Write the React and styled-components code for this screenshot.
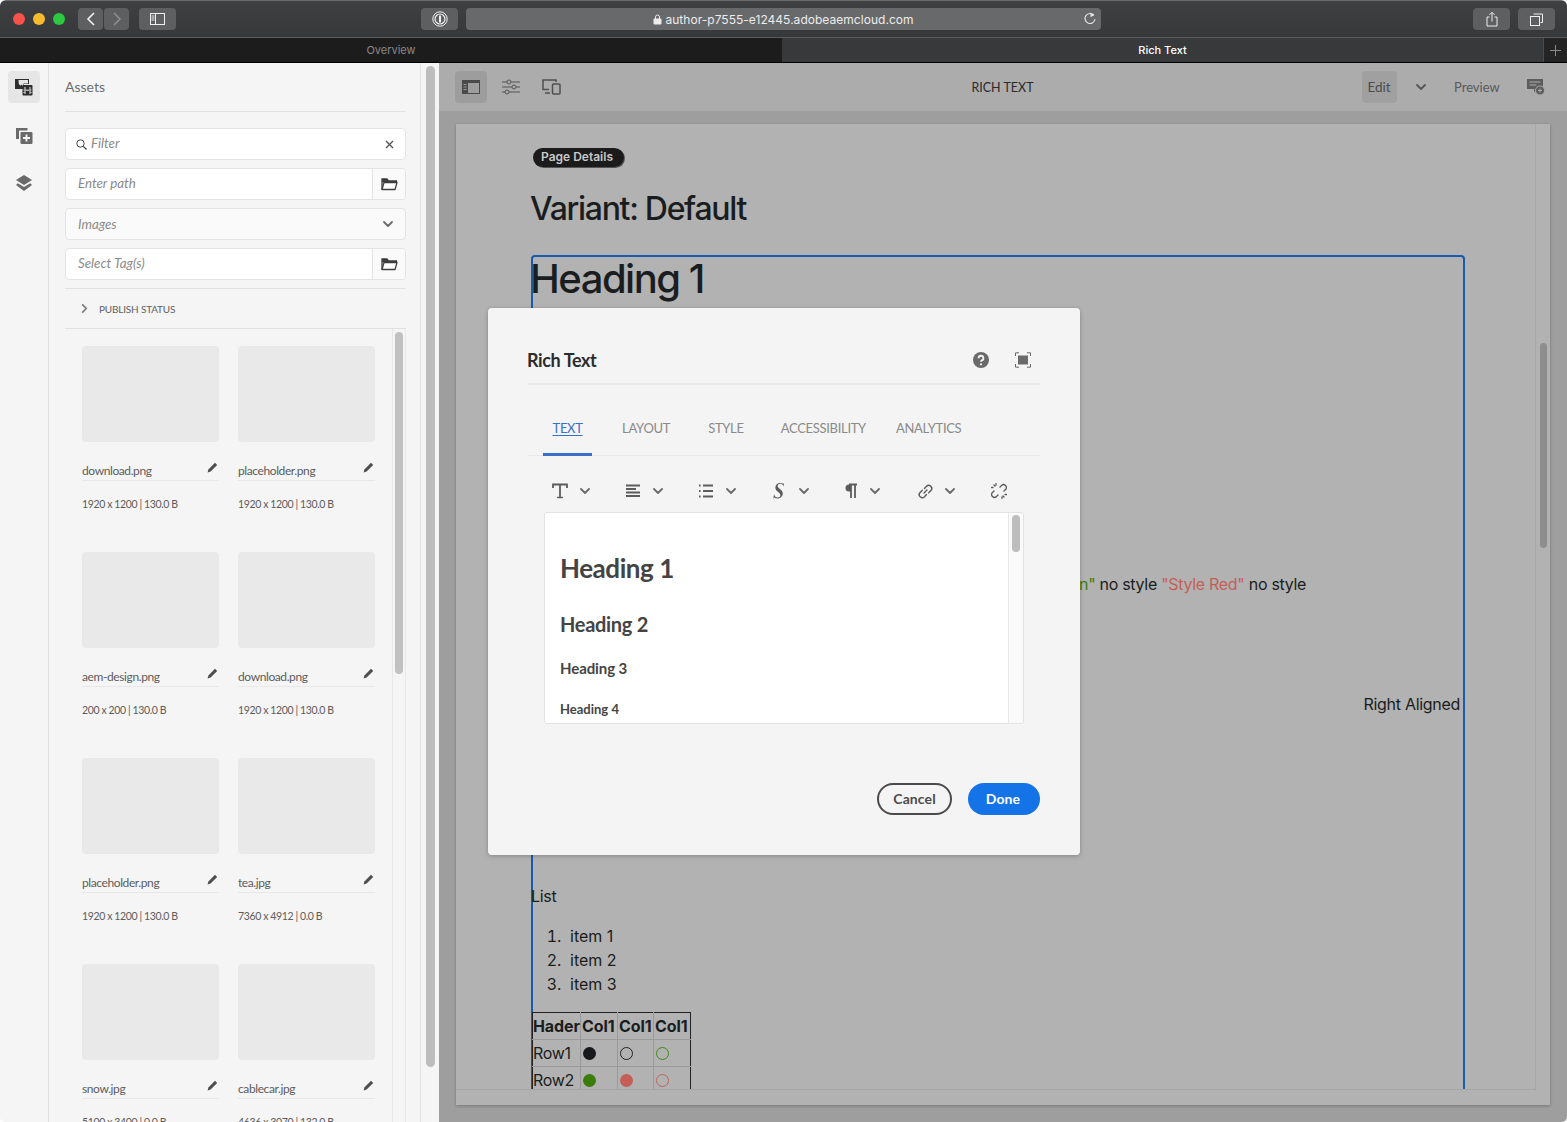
import React from "react";
import styled, { createGlobalStyle } from "styled-components";

const Global = createGlobalStyle`
  html, body { margin: 0; padding: 0; background: #fff; }
  * { box-sizing: border-box; }
`;

const clean = `"Lato", "Noto Sans", sans-serif`;
const ui = `"Inter", "Liberation Sans", sans-serif`;

const Window = styled.div`
  width: 1567px; height: 1122px; overflow: hidden; display: flex; flex-direction: column;
  border-radius: 6px 6px 5px 5px; font-family: ${clean};
`;
const TitleBar = styled.div`
  height: 38px; flex: none; display: flex; align-items: center; padding: 0 12px 0 13px;
  background: linear-gradient(#3f4042, #37383a); border-top: 1px solid #6a6a6a; border-bottom: 1px solid #5b5b5b;
`;
const Light = styled.span`
  width: 12px; height: 12px; border-radius: 50%; background: ${p => p.$c}; margin-right: 8px; flex: none;
`;
const ChromeBtn = styled.div`
  height: 22px; width: ${p => p.$w}px; margin-left: ${p => p.$ml || 0}px; border-radius: 4px; background: #5e5f61;
  display: flex; align-items: center; justify-content: center; flex: none;
`;
const Url = styled.div`
  width: 635px; height: 22px; margin-left: 8px; border-radius: 4px; background: #68696b; color: #ececec;
  display: flex; align-items: center; justify-content: center; position: relative;
  font: 12px ${ui}; letter-spacing: 0.03px; gap: 3px; flex: none;
`;
const Reload = styled.span`
  position: absolute; right: 4px; top: 4px; display: flex;
`;
const Spacer = styled.div`flex: 1;`;
const TabBar = styled.div`
  height: 25px; flex: none; display: flex; border-bottom: 1px solid #000; font: 11px ${ui};
`;
const BrowserTab = styled.div`
  width: ${p => p.$w}px; display: flex; align-items: center; justify-content: center;
  background: ${p => p.$active ? "#38393b" : "#1c1c1c"}; color: ${p => p.$active ? "#fff" : "#8a8a8a"};
  ${p => p.$active ? "font-weight: 500;" : ""}
`;
const NewTab = styled.div`
  flex: 1; background: #242425; border-left: 1px solid #4a4a4a; display: flex; align-items: center; justify-content: center;
`;
const Main = styled.div`flex: 1; min-height: 0; display: flex; position: relative;`;
const Rail = styled.nav`
  width: 49px; flex: none; background: #f5f5f5; border-right: 1px solid #e1e1e1; padding-top: 8px;
  display: flex; flex-direction: column; align-items: center; gap: 16px;
`;
const RailBtn = styled.div`
  width: 32px; height: 32px; border-radius: 4px; background: ${p => p.$active ? "#e6e6e6" : "transparent"};
  display: flex; align-items: center; justify-content: center;
`;
const Panel = styled.aside`
  width: 371px; flex: none; background: #f5f5f5; padding: 0 14px 0 16px; display: flex; flex-direction: column; min-height: 0;
`;
const PanelHead = styled.div`
  height: 49px; flex: none; display: flex; align-items: center; padding-bottom: 2px; font-size: 14px; color: #6e6e6e;
  border-bottom: 1px solid #e1e1e1; margin-bottom: 16px;
`;
const Field = styled.div`
  height: 32px; flex: none; margin-bottom: 8px; display: flex; align-items: center; background: ${p => p.$soft ? "#fafafa" : "#fff"};
  border: 1px solid #e3e3e3; border-radius: 4px; font-size: 13.300px; font-style: italic; color: #8a8a8a;
`;
const FieldText = styled.span`flex: 1; padding-left: ${p => p.$pl || 12}px; padding-bottom: ${p => p.$flat ? 0 : 2}px;`;
const FieldEnd = styled.div`
  width: 33px; height: 100%; flex: none; border-left: 1px solid #e3e3e3; background: #fafafa; border-radius: 0 4px 4px 0;
  display: flex; align-items: center; justify-content: center;
`;
const PlainEnd = styled.div`width: ${p => p.$w || 31}px; display: flex; align-items: center; justify-content: center;`;
const SearchSlot = styled.div`padding-left: 10px; display: flex;`;
const Publish = styled.div`
  height: 41px; flex: none; display: flex; align-items: center; gap: 10px; padding-left: 15px; font-size: 10px; color: #606060;
  letter-spacing: -0.18px; border-top: 1px solid #e1e1e1; border-bottom: 1px solid #e1e1e1;
`;
const ListArea = styled.div`flex: 1; min-height: 0; display: flex; overflow: hidden;`;
const AssetGrid = styled.div`
  flex: 1; padding: 17px 0 0 17px; display: grid; grid-template-columns: 137px 137px; column-gap: 19px; grid-auto-rows: 206px;
`;
const Card = styled.div`display: flex; flex-direction: column;`;
const Thumb = styled.div`height: 96px; border-radius: 4px; background: #e9e9e9; flex: none;`;
const NameRow = styled.div`
  margin-top: 20px; height: 19px; flex: none; border-bottom: 1px solid #e8e8e8; display: flex; justify-content: space-between;
  font-size: 12px; color: #5c5c5c; line-height: 18px; letter-spacing: -0.4px;
`;
const Pencil = styled.span`display: flex; margin: 0 1px 0 0;`;
const Meta = styled.div`margin-top: 15px; font-size: 10.500px; color: #5c5c5c; line-height: 16px; letter-spacing: -0.38px;`;
const Track = styled.div`
  width: ${p => p.$w}px; flex: none; padding: ${p => p.$pt}px ${p => p.$pr}px 0 ${p => p.$pl}px;
  background: ${p => p.$bg}; border-left: 1px solid ${p => p.$line}; ${p => p.$rline ? `border-right: 1px solid ${p.$rline};` : ""}
`;
const ScrollThumb = styled.div`
  height: ${p => p.$h}px; margin-top: ${p => p.$top || 0}px; border-radius: 5px; background: ${p => p.$c};
`;
const Editor = styled.main`flex: 1; min-width: 0; display: flex; flex-direction: column; background: #9e9e9e;`;
const EditBar = styled.div`
  height: 48px; flex: none; background: #acacac; display: flex; align-items: center; padding: 0 22px 0 16px; position: relative;
  font-size: 13px; color: #505050;
`;
const BarBtn = styled.div`
  width: 32px; height: 32px; border-radius: 4px; margin-right: 8px; background: ${p => p.$active ? "#9d9d9d" : "transparent"};
  display: flex; align-items: center; justify-content: center; flex: none;
`;
const BarTitle = styled.div`
  flex: 1; text-align: center; color: #2a2a2a; padding-left: 68px; font-size: 12.500px;
`;
const EditBtn = styled.div`
  width: 35px; height: 32px; border-radius: 4px; background: #a0a0a0; display: flex; align-items: center; justify-content: center;
  font-size: 13.500px; color: #4c4c4c; padding-right: 1px;
`;
const BarChevron = styled.div`width: 47px; display: flex; justify-content: center;`;
const BarLink = styled.div`width: 46px; margin-left: 10px; margin-right: 27px; font-size: 13px; color: #5a5a5a; white-space: nowrap;`;
const Canvas = styled.div`flex: 1; min-height: 0; padding: 13px 17px 17px 17px;`;
const Frame = styled.div`
  height: 100%; display: flex; background: #b2b2b2; box-shadow: 0 1px 3px rgba(0,0,0,.25);
`;
const FrameCol = styled.div`flex: 1; min-width: 0; display: flex; flex-direction: column;`;
const FrameFoot = styled.div`height: 15px; flex: none;`;
const Viewport = styled.div`
  flex: 1; min-height: 0; overflow: hidden; border-bottom: 1px solid #a6a6a6; border-right: 1px solid #a6a6a6; padding: 24px 0 0 75px;
  font: 16px/24px ${ui}; color: #1a1d20; letter-spacing: -0.3px;
`;
const Badge = styled.div`
  display: inline-block; margin-left: 2px; height: 19px; width: 91px; border-radius: 10px; background: #1b1b1b; color: #c8c8c8;
  font: 600 12px/17px ${ui}; letter-spacing: 0; text-align: center; padding-right: 3px; box-shadow: 1px 1px 0 #555; vertical-align: top;
`;
const Variant = styled.h2`
  margin: 17px 0 0 -1px; font: 500 32px/40px ${ui}; letter-spacing: -1.300px; color: #1a1d20;
`;
const Selected = styled.section`
  margin-top: 26px; width: 934px; height: 900px; border: 2px solid #1a5cab; border-bottom: 0; border-radius: 4px 4px 0 0;
`;
const H1 = styled.h1`margin: 0 0 0 -3px; font: 500 40px/44px ${ui}; letter-spacing: -1.500px; color: #1a1d20;`;
const Styled = styled.p`margin: 271px 0 0 546px; white-space: nowrap;`;
const Green = styled.span`color: #3a7c0e;`;
const Red = styled.span`color: #c45f58;`;
const RightAligned = styled.p`margin: 96px 3px 0 0; text-align: right;`;
const ListLabel = styled.p`margin: 168px 0 0 -2px;`;
const Items = styled.ol`
  margin: 16px 0 0; padding-left: 37px; letter-spacing: 0;
  li::marker { content: counter(list-item) ".  "; }
`;
const Table = styled.table`
  border-collapse: collapse; table-layout: fixed; width: 158px; margin: 16px 0 0 -1px; border: 1px solid #222; color: #1a1d20;
  th, td { border: 1px solid #9a9a9a; padding: 0; height: 27px; text-align: left; font-size: 16px; line-height: 22px; white-space: nowrap; }
  th { font-weight: 700; border-top: 1px solid #222; letter-spacing: -0.1px; }
  th:nth-child(1) { width: 48px; }
  th:nth-child(2) { width: 37px; }
  th:nth-child(3) { width: 36px; }
  th:nth-child(4) { width: 37px; }
  td:last-child, th:last-child { border-right: 1px solid #222; }
  td:first-child, th:first-child { border-left: 0; }
  th + th { padding-left: 1px; }
`;
const Dot = styled.span`
  display: block; margin-left: 2px; width: 13px; height: 13px; border-radius: 50%;
  ${p => p.$fill ? `background: ${p.$c};` : `border: 1.700px solid ${p.$c};`}
`;
const Modal = styled.div`
  position: absolute; left: 488px; top: 245px; width: 592px; height: 547px; padding: 0 40px; background: #f4f4f4;
  border-radius: 4px; box-shadow: 0 1px 4px rgba(0,0,0,.25); display: flex; flex-direction: column;
`;
const ModalHead = styled.div`
  height: 77px; flex: none; display: flex; align-items: center; padding: 28px 9px 0 0; border-bottom: 2px solid #e8e8e8;
`;
const ModalTitle = styled.div`flex: 1; margin-left: -1px; font-size: 18px; font-weight: 700; color: #2c2c2c; letter-spacing: -0.4px;`;
const HeadIcon = styled.span`display: flex; margin-left: ${p => p.$ml}px;`;
const Tabs = styled.div`
  height: 71px; flex: none; display: flex; align-items: flex-end; border-bottom: 1px solid #e8e8e8; padding-left: 15px;
`;
const Tab = styled.div`
  height: 37px; padding-top: 1px; margin-left: ${p => p.$ml}px; padding-left: ${p => p.$active ? "9.500px" : "0"}; padding-right: ${p => p.$active ? "9.500px" : "0"}; margin-bottom: -1px;
  font-size: 13px; letter-spacing: -0.3px; color: ${p => p.$active ? "#3a6fc8" : "#8a8a8a"}; white-space: nowrap;
  ${p => p.$active ? "border-bottom: 3px solid #3a6fc8; text-decoration: underline; text-underline-offset: 2px;" : ""}
`;
const Tools = styled.div`
  height: 56px; flex: none; display: flex; align-items: center; padding: 14px 0 0 24px;
`;
const Tool = styled.div`
  width: ${p => p.$w}px; flex: none; display: flex; align-items: center; gap: ${p => p.$gap || 12}px;
`;
const Rte = styled.div`
  width: 480px; height: 212px; margin-left: 16px; flex: none; display: flex; background: #fff; border: 1px solid #e3e3e3; border-radius: 3px; overflow: hidden;
`;
const RteBody = styled.div`flex: 1; padding: 0 0 0 15px; color: #444; font-weight: 700;`;
const RteH = styled.div`
  font-size: ${p => p.$s}px; line-height: ${p => p.$lh}px; margin-top: ${p => p.$mt}px; letter-spacing: ${p => p.$ls}px; white-space: nowrap;
`;
const Actions = styled.div`margin-top: 59px; display: flex; justify-content: flex-end; gap: 16px;`;
const Btn = styled.div`
  height: 32px; width: ${p => p.$w}px; border-radius: 16px; display: flex; align-items: center; justify-content: center;
  font-size: 14px; font-weight: 700; letter-spacing: 0.1px; padding-bottom: 1px;
  ${p => p.$primary ? "background: #1473e6; color: #fff; padding-right: 2px;" : "border: 2px solid #4b4b4b; color: #4b4b4b;"}
`;

const S = ({ w = 18, h = 18, vb, children, ...r }) => (
  <svg width={w} height={h} viewBox={vb || `0 0 ${w} ${h}`} fill="none" {...r}>{children}</svg>
);
const Chev = ({ c = "#6b6b6b", w = 10, dir = "down" }) => (
  <S w={w} h={w} vb="0 0 10 10" style={{ transform: dir === "right" ? "rotate(-90deg)" : "none" }}>
    <path d="M1 3l4 4 4-4" stroke={c} strokeWidth="1.8" strokeLinecap="round" strokeLinejoin="round" />
  </S>
);
const Folder = () => (
  <S w={17} h={14}>
    <path d="M1 12.5V2h5l1.5 2h8v2" stroke="#3c3c3c" strokeWidth="1.3" />
    <path d="M1 2h5l1.5 2h8v1.600H1z" fill="#3c3c3c" />
    <path d="M1 12.5L3 5.600h13l-2 6.900z" stroke="#3c3c3c" strokeWidth="1.300" fill="#fff" strokeLinejoin="round" />
  </S>
);
const PencilIcon = () => (
  <S w={11} h={11}>
    <path d="M8 .8l2.2 2.2-6.6 6.6L.6 10.4l.8-3z" fill="#4e4e4e" />
  </S>
);

const cards = [
  ["download.png", "1920 x 1200 | 130.0 B"], ["placeholder.png", "1920 x 1200 | 130.0 B"],
  ["aem-design.png", "200 x 200 | 130.0 B"], ["download.png", "1920 x 1200 | 130.0 B"],
  ["placeholder.png", "1920 x 1200 | 130.0 B"], ["tea.jpg", "7360 x 4912 | 0.0 B"],
  ["snow.jpg", "5100 x 3400 | 0.0 B"], ["cablecar.jpg", "4636 x 3070 | 132.0 B"],
];

const tools = [
  { w: 73, chev: true, icon: <S w={16} h={16}><path d="M1 5V1.500h14V5M8 1.500V14.500" stroke="#5c5c5c" strokeWidth="1.800" /><path d="M5 14.500h6" stroke="#5c5c5c" strokeWidth="1.400" /></S> },
  { w: 73, chev: true, icon: <S w={16} h={16}><path d="M1 2.500h14M1 6h10M1 9.500h14M1 13h14" stroke="#5c5c5c" strokeWidth="1.800" /></S> },
  { w: 73, chev: true, icon: <S w={16} h={16}><path d="M5 2.500h10M5 8h10M5 13.500h10" stroke="#5c5c5c" strokeWidth="1.800" /><path d="M1 2.500h1.600M1 8h1.600M1 13.500h1.600" stroke="#5c5c5c" strokeWidth="2" /></S> },
  { w: 73, chev: true, icon: <S w={16} h={18}><path d="M13 1.200l-.4 3.300c-.5-1.600-1.700-2.700-3.300-2.700-1.500 0-2.600.9-2.600 2.200 0 3 5.100 3.400 5.100 7.400 0 2.800-2.300 5-5.200 5-1.100 0-2.200-.3-3-.9l-1.200 1 .6-4.300c.6 2 2 3.300 3.800 3.300 1.500 0 2.600-1 2.600-2.300 0-3-5-3.500-5-7.400C4.400 3 6.500 1 9.300 1c1 0 1.900.2 2.700.7z" fill="#5c5c5c" /></S> },
  { w: 73, chev: true, icon: <S w={14} h={16}><path d="M7 1.500H5A3.500 3.500 0 0 0 5 8.500h2z" fill="#5c5c5c" /><path d="M7 1.500V15M11 1.500V15M5 1.500h8" stroke="#5c5c5c" strokeWidth="1.800" /></S> },
  { w: 74, gap: 11, chev: true, icon: <S w={17} h={17}><path d="M7 10l3-3M7.500 5.500l2-2.200a3 3 0 0 1 4.400 4.200l-2.200 2.300M9.500 11.500l-2 2.200a3 3 0 0 1-4.400-4.200l2.200-2.300" stroke="#5c5c5c" strokeWidth="1.400" strokeLinecap="round" /></S> },
  { w: 20, icon: <S w={16} h={16}><path d="M9 4l1.500-1.500a2.800 2.800 0 0 1 4 4L13 8M7 12l-1.500 1.500a2.800 2.800 0 0 1-4-4L3 8M5 2V.5M2 4.500H.5M11 14v1.500M14 11.500h1.500M3 2l1 1M13 14l-1-1" stroke="#5c5c5c" strokeWidth="1.300" strokeLinecap="round" /></S> },
];

export default function App() {
  return (
    <Window>
      <Global />
      <TitleBar>
        <Light $c="#f5524c" /><Light $c="#f6bb2f" /><Light $c="#2bc840" />
        <ChromeBtn $w={25} $ml={5}>
          <S w={10} h={16}><path d="M8 2L2 8l6 6" stroke="#f2f2f2" strokeWidth="1.6" /></S>
        </ChromeBtn>
        <ChromeBtn $w={25} $ml={1}>
          <S w={10} h={16}><path d="M2 2l6 6-6 6" stroke="#8d8d8d" strokeWidth="1.6" /></S>
        </ChromeBtn>
        <ChromeBtn $w={37} $ml={10}>
          <S w={15} h={12}><rect x=".5" y=".5" width="14" height="11" stroke="#f0f0f0" /><path d="M5.500 0v12M1.500 3h3M1.500 5h3M1.500 7h3" stroke="#f0f0f0" /></S>
        </ChromeBtn>
        <ChromeBtn $w={37} $ml={245}>
          <S w={16} h={16}><circle cx="8" cy="8" r="7.200" stroke="#f0f0f0" /><circle cx="8" cy="8" r="5" stroke="#f0f0f0" strokeWidth="1.200" /><path d="M8 4.500v7" stroke="#f0f0f0" strokeWidth="2" /></S>
        </ChromeBtn>
        <Url>
          <S w={9} h={11}><rect x=".5" y="4.500" width="8" height="6" rx="1" fill="#ececec" /><path d="M2.500 5V3a2 2 0 0 1 4 0v2" stroke="#ececec" /></S>
          author-p7555-e12445.adobeaemcloud.com
          <Reload><S w={14} h={14}><path d="M10.800 3.200A5 5 0 1 0 12 7" stroke="#e6e6e6" strokeWidth="1.100" /><path d="M7.500 0.700l4 2.300-4 2.300z" fill="#e6e6e6" /></S></Reload>
        </Url>
        <Spacer />
        <ChromeBtn $w={37}>
          <S w={12} h={16}><path d="M3.500 6H1v9h10V6H8.500M6 10.500V1.500M3.500 3.800L6 1.300l2.500 2.500" stroke="#efefef" strokeWidth="1" /></S>
        </ChromeBtn>
        <ChromeBtn $w={37} $ml={8}>
          <S w={13} h={13}><rect x=".5" y="3.500" width="9" height="9" stroke="#efefef" /><path d="M3.500 1h9v8.500h-2" stroke="#efefef" /></S>
        </ChromeBtn>
      </TitleBar>
      <TabBar>
        <BrowserTab $w={782}>Overview</BrowserTab>
        <BrowserTab $w={761} $active>Rich Text</BrowserTab>
        <NewTab><S w={11} h={11}><path d="M5.500 0v11M0 5.500h11" stroke="#8a8a8a" /></S></NewTab>
      </TabBar>
      <Main>
        <Rail>
          <RailBtn $active>
            <S w={18} h={18}>
              <path d="M0 1h14v5H9v5H0z" fill="#2e2e2e" /><path d="M3.500 2H13v3.500H8.500V9L6.500 6.500 4 9z" fill="#e6e6e6" /><path d="M.8 8.200L3.500 5.500l2 2.500v2.200H.8z" fill="#2e2e2e" />
              <rect x="7.500" y="7" width="10" height="10.500" rx=".8" fill="#2e2e2e" />
              <path d="M10 9v7M15 9v7M8.500 12h1M8.500 14.500h1M15.500 12h1M15.500 14.500h1M10.500 12.200h4" stroke="#e6e6e6" />
            </S>
          </RailBtn>
          <RailBtn>
            <S w={17} h={17}><path d="M0 1h11.500v2.500H3v8.500H0z" fill="#6a6a6a" /><rect x="4.500" y="5" width="12" height="12" rx="1" fill="#6a6a6a" /><path d="M10.500 7.500v7M7 11h7" stroke="#f5f5f5" strokeWidth="1.800" /></S>
          </RailBtn>
          <RailBtn>
            <S w={18} h={17}><path d="M9 0l8 5-8 5-8-5z" fill="#6a6a6a" /><path d="M2.800 8.200L9 12l6.200-3.800L17 10l-8 6-8-6z" fill="#6a6a6a" /></S>
          </RailBtn>
        </Rail>
        <Panel>
          <PanelHead>Assets</PanelHead>
          <Field>
            <SearchSlot><S w={11} h={11}><circle cx="4.500" cy="4.500" r="3.700" stroke="#444" /><path d="M7.300 7.300l3.200 3.200" stroke="#444" strokeWidth="1.200" /></S></SearchSlot>
            <FieldText $pl={4}>Filter</FieldText>
            <PlainEnd><S w={9} h={9}><path d="M1 1l7 7M8 1L1 8" stroke="#555" strokeWidth="1.400" /></S></PlainEnd>
          </Field>
          <Field><FieldText>Enter path</FieldText><FieldEnd><Folder /></FieldEnd></Field>
          <Field $soft><FieldText $flat>Images</FieldText><PlainEnd $w={35}><Chev /></PlainEnd></Field>
          <Field><FieldText>Select Tag(s)</FieldText><FieldEnd><Folder /></FieldEnd></Field>
          <Publish><Chev dir="right" w={9} c="#777" />PUBLISH STATUS</Publish>
          <ListArea>
            <AssetGrid>
              {cards.map((c, i) => (
                <Card key={i}>
                  <Thumb />
                  <NameRow>{c[0]}<Pencil><PencilIcon /></Pencil></NameRow>
                  <Meta>{c[1]}</Meta>
                </Card>
              ))}
            </AssetGrid>
            <Track $w={14} $pt={3} $pl={2} $pr={2} $bg="#f5f5f5" $line="#e8e8e8" $rline="#e8e8e8">
              <ScrollThumb $h={342} $c="#c1c1c1" />
            </Track>
          </ListArea>
        </Panel>
        <Track $w={19} $pt={3} $pl={5} $pr={4} $bg="#f5f5f5" $line="#e4e4e4">
          <ScrollThumb $h={1001} $c="#bdbdbd" />
        </Track>
        <Editor>
          <EditBar>
            <BarBtn $active>
              <S w={18} h={14}><path d="M0 0h18v14H0z" fill="#4a4a4a" /><rect x="6" y="3" width="11" height="10" fill="#9d9d9d" /><path d="M1.500 4.500h3M1.500 7h3M1.500 9.500h3" stroke="#9d9d9d" /></S>
            </BarBtn>
            <BarBtn>
              <S w={18} h={16}><path d="M0 3h5M9 3h9M0 8h10M14 8h4M0 13h3M7 13h11" stroke="#555" /><circle cx="7" cy="3" r="2" stroke="#555" /><circle cx="12" cy="8" r="2" stroke="#555" /><circle cx="5" cy="13" r="2" stroke="#555" /></S>
            </BarBtn>
            <BarBtn>
              <S w={19} h={16}><path d="M14 3V1H1v9.500h6" stroke="#4f4f4f" strokeWidth="1.500" /><rect x="10.500" y="5" width="7.500" height="10" rx="1" stroke="#4f4f4f" strokeWidth="1.500" /><path d="M3 14h5" stroke="#4f4f4f" strokeWidth="1.500" /></S>
            </BarBtn>
            <BarTitle>RICH TEXT</BarTitle>
            <EditBtn>Edit</EditBtn>
            <BarChevron><Chev c="#555" /></BarChevron>
            <BarLink>Preview</BarLink>
            <S w={18} h={18}><path d="M0 1h16v10H9l-2 4v-4H0z" fill="#5c5c5c" /><path d="M2.500 4h11M2.500 7h7" stroke="#acacac" /><circle cx="13" cy="12.500" r="4.500" fill="#5c5c5c" stroke="#acacac" /><path d="M13 10.500v4M11 12.500h4" stroke="#acacac" /></S>
          </EditBar>
          <Canvas>
            <Frame>
              <FrameCol>
                <Viewport>
                  <Badge>Page Details</Badge>
                  <Variant>Variant: Default</Variant>
                  <Selected>
                    <H1>Heading 1</H1>
                    <Styled><Green>n"</Green> no style <Red>"Style Red"</Red> no style</Styled>
                    <RightAligned>Right Aligned</RightAligned>
                    <ListLabel>List</ListLabel>
                    <Items><li>item 1</li><li>item 2</li><li>item 3</li></Items>
                    <Table>
                      <tbody>
                        <tr><th>Hader</th><th>Col1</th><th>Col1</th><th>Col1</th></tr>
                        <tr><td>Row1</td><td><Dot $fill $c="#17191c" /></td><td><Dot $c="#222" /></td><td><Dot $c="#3f8a12" /></td></tr>
                        <tr><td>Row2</td><td><Dot $fill $c="#3a7d0a" /></td><td><Dot $fill $c="#c45f58" /></td><td><Dot $c="#c45f58" /></td></tr>
                      </tbody>
                    </Table>
                  </Selected>
                </Viewport>
                <FrameFoot />
              </FrameCol>
              <Track $w={14} $pt={219} $pl={3} $pr={3} $bg="#b2b2b2" $line="transparent">
                <ScrollThumb $h={205} $c="#8e8e8e" />
              </Track>
            </Frame>
          </Canvas>
        </Editor>
        <Modal>
          <ModalHead>
            <ModalTitle>Rich Text</ModalTitle>
            <HeadIcon $ml={0}>
              <S w={16} h={16}><circle cx="8" cy="8" r="8" fill="#6a6a6a" /><path d="M5.600 6.200A2.400 2.400 0 1 1 8.500 8.500c-.4.200-.5.500-.5 1v.3" stroke="#f4f4f4" strokeWidth="1.800" /><circle cx="8" cy="12.300" r="1.100" fill="#f4f4f4" /></S>
            </HeadIcon>
            <HeadIcon $ml={26}>
              <S w={16} h={16}><path d="M.5 4V.8h3.500M12 .8h3.500V4M15.500 12v3.200H12M4 15.200H.5V12" stroke="#6a6a6a" /><rect x="3" y="3.500" width="10" height="9" fill="#6a6a6a" /></S>
            </HeadIcon>
          </ModalHead>
          <Tabs>
            <Tab $active $ml={0}>TEXT</Tab>
            <Tab $ml={30}>LAYOUT</Tab>
            <Tab $ml={38}>STYLE</Tab>
            <Tab $ml={37}>ACCESSIBILITY</Tab>
            <Tab $ml={30}>ANALYTICS</Tab>
          </Tabs>
          <Tools>
            {tools.map((t, i) => (
              <Tool key={i} $w={t.w} $gap={t.gap}>{t.icon}{t.chev && <Chev />}</Tool>
            ))}
          </Tools>
          <Rte>
            <RteBody>
              <RteH $s={26} $lh={36} $mt={37} $ls={-0.45}>Heading 1</RteH>
              <RteH $s={20} $lh={28} $mt={24} $ls={-0.3}>Heading 2</RteH>
              <RteH $s={15} $lh={22} $mt={19} $ls={-0.1}>Heading 3</RteH>
              <RteH $s={13} $lh={18} $mt={21} $ls={0}>Heading 4</RteH>
            </RteBody>
            <Track $w={15} $pt={2} $pl={3} $pr={3} $bg="#fafafa" $line="#e8e8e8">
              <ScrollThumb $h={37} $c="#bdbdbd" />
            </Track>
          </Rte>
          <Actions>
            <Btn $w={75}>Cancel</Btn>
            <Btn $w={72} $primary>Done</Btn>
          </Actions>
        </Modal>
      </Main>
    </Window>
  );
}
